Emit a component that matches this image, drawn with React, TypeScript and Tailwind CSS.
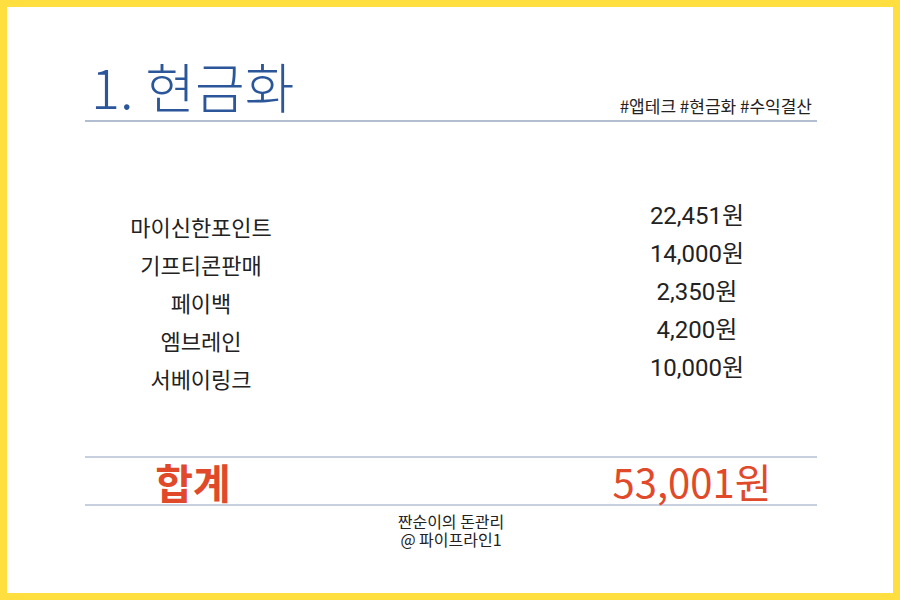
import React from 'react';

const items = [
  { name: '마이신한포인트', amount: '22,451원' },
  { name: '기프티콘판매', amount: '14,000원' },
  { name: '페이백', amount: '2,350원' },
  { name: '엠브레인', amount: '4,200원' },
  { name: '서베이링크', amount: '10,000원' },
];

const kr = "font-['Noto_Sans_CJK_KR',sans-serif]";

const App: React.FC = () => {
  return (
    <div className="h-[600px] w-[900px] overflow-hidden border-[7px] border-[#FFDF40] bg-white">
      <div className={`ml-[78px] w-[732px] ${kr}`}>
        {/* header */}
        <div className="flex items-end justify-between border-b-2 border-[#B3BDD2] pt-[48px] pb-[3px]">
          <h1 className="pl-[6px] text-[54px] leading-[62px] font-light text-[#2B579A]">
            1. 현금화
          </h1>
          <div className="pr-[5px] pb-[1px] text-[17px] leading-[20px] text-[#222]">
            #앱테크 #현금화 #수익결산
          </div>
        </div>

        {/* items */}
        <div className="mt-[86px] flex h-[248px]">
          <div className="flex w-[232px] flex-col items-center pt-[3px]">
            {items.map((it) => (
              <div key={it.name} className="h-[38px] text-[22px] leading-[30px] text-[#222]">
                {it.name}
              </div>
            ))}
          </div>
          <div className="ml-auto flex w-[240px] flex-col items-center">
            <div className="-mt-[7px]" />
            {items.map((it) => (
              <div
                key={it.amount}
                className="h-[38px] font-['Roboto','Noto_Sans_CJK_KR',sans-serif] text-[24px] leading-[30px] text-[#222]"
              >
                {it.amount}
              </div>
            ))}
          </div>
        </div>

        {/* total */}
        <div className="flex h-[50px] items-center border-y-2 border-[#C8D0E0]">
          <div className="w-[212px] pl-[4px] text-center text-[41px] font-semibold leading-[46px] text-[#E04A2A]">
            합계
          </div>
          <div className="ml-auto w-[250px] text-center text-[40px] leading-[46px] text-[#E04A2A]">
            53,001원
          </div>
        </div>

        {/* footer */}
        <p className="pt-[6px] text-center text-[16px] leading-[18px] text-[#222]">
          짠순이의 돈관리
          <br />
          @ 파이프라인1
        </p>
      </div>
    </div>
  );
};

export default App;
